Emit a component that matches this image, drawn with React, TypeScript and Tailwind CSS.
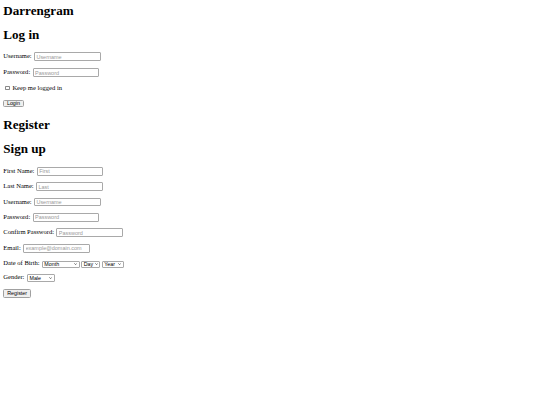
import React from "react";

const sans = "font-['Liberation_Sans',Arial,sans-serif]";

function TextInput({ placeholder }: { placeholder: string }) {
  return (
    <input
      type="text"
      placeholder={placeholder}
      className="box-border h-[8.8px] w-[66.5px] rounded-[1px] border border-[#a9a9a9] bg-white px-[1.4px] font-['Liberation_Sans',Arial,sans-serif] text-[5.47px] leading-[6px] text-black outline-none placeholder:text-[#9a9a9a]"
    />
  );
}

function Chevron() {
  return (
    <svg width="3.2" height="2" viewBox="0 0 10 6" className="shrink-0">
      <path d="M1 1l4 4 4-4" fill="none" stroke="#111" strokeWidth="1.8" />
    </svg>
  );
}

function FakeSelect({ value, width }: { value: string; width: string }) {
  return (
    <div
      className={`box-border flex h-[7.2px] items-center justify-between rounded-[1px] border border-[#a9a9a9] bg-white pl-[1.3px] pr-[1.4px] ${sans} text-[5.3px] leading-[6px] text-black ${width}`}
    >
      <span>{value}</span>
      <Chevron />
    </div>
  );
}

function Label({ children, cls = "" }: { children: React.ReactNode; cls?: string }) {
  return <span className={`block whitespace-nowrap text-[6.56px] leading-[7.5px] ${cls}`}>{children}</span>;
}

function InputRow({ label, placeholder, mt }: { label: string; placeholder: string; mt: string }) {
  return (
    <div className={`flex items-start gap-[2.4px] ${mt}`}>
      <Label>{label}</Label>
      <TextInput placeholder={placeholder} />
    </div>
  );
}

function Heading({ children, mt }: { children: React.ReactNode; mt: string }) {
  return <h1 className={`text-[13.1px] font-bold leading-[15px] ${mt}`}>{children}</h1>;
}

function Btn({ children, cls }: { children: React.ReactNode; cls: string }) {
  return (
    <button
      type="button"
      className={`box-border flex items-center justify-center rounded-[1.5px] border border-[#a0a0a0] bg-[#efefef] ${sans} text-[5.3px] leading-[6px] text-black ${cls}`}
    >
      {children}
    </button>
  );
}

export default function App() {
  return (
    <div className="min-h-screen bg-white pl-[3.3px] pt-[3.4px] font-['Liberation_Serif','Times_New_Roman',serif] text-[6.56px] leading-[7.5px] text-black">
      <div className="flex flex-col items-start">
        <Heading mt="mt-0">Darrengram</Heading>
        <Heading mt="mt-[9px]">Log in</Heading>
        <InputRow label="Username:" placeholder="Username" mt="mt-[9.9px]" />
        <InputRow label="Password:" placeholder="Password" mt="mt-[7.4px]" />
        <div className="mt-[6.7px] flex h-[7.5px] items-center">
          <span className="ml-[2px] box-border block h-[4.4px] w-[4.4px] rounded-[0.8px] border border-[#8a8a8a] bg-white" />
          <Label cls="ml-[2.7px]">Keep me logged in</Label>
        </div>
        <Btn cls="mt-[8.2px] h-[7.6px] w-[20.3px]">Login</Btn>

        <Heading mt="mt-[9.5px]">Register</Heading>
        <Heading mt="mt-[9px]">Sign up</Heading>
        <InputRow label="First Name:" placeholder="First" mt="mt-[11px]" />
        <InputRow label="Last Name:" placeholder="Last" mt="mt-[6.65px]" />
        <InputRow label="Username:" placeholder="Username" mt="mt-[6.65px]" />
        <InputRow label="Password:" placeholder="Password" mt="mt-[6.65px]" />
        <InputRow label="Confirm Password:" placeholder="Password" mt="mt-[6.65px]" />
        <InputRow label="Email:" placeholder="example@domain.com" mt="mt-[6.65px]" />

        <div className="mt-[6.2px] flex items-start gap-[2.4px]">
          <Label>Date of Birth:</Label>
          <div className="mt-[1.7px] flex gap-[1.6px]">
            <FakeSelect value="Month" width="w-[37.7px]" />
            <FakeSelect value="Day" width="w-[19px]" />
            <FakeSelect value="Year" width="w-[21.7px]" />
          </div>
        </div>

        <div className="mt-[5.3px] flex items-start gap-[2.8px]">
          <Label>Gender:</Label>
          <div className="mt-[1.3px]">
            <FakeSelect value="Male" width="w-[27.6px]" />
          </div>
        </div>

        <Btn cls="mt-[7.6px] h-[8.4px] w-[27.7px]">Register</Btn>
      </div>
    </div>
  );
}
